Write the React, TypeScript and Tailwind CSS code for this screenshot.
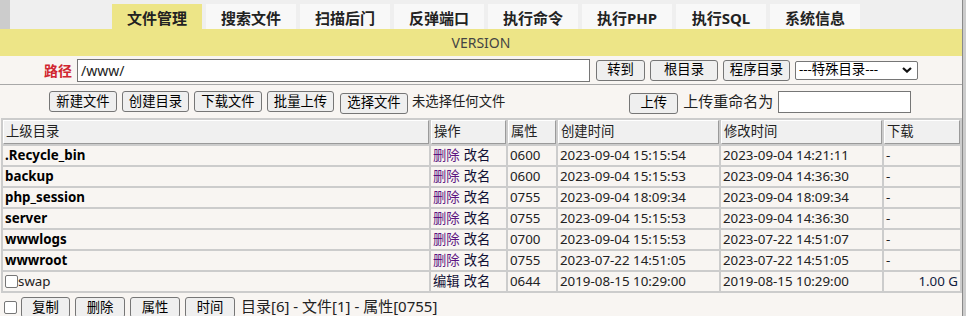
const tabs = ["文件管理", "搜索文件", "扫描后门", "反弹端口", "执行命令", "执行PHP", "执行SQL", "系统信息"]

const rows = [
  { name: ".Recycle_bin", perm: "0600", ctime: "2023-09-04 15:15:54", mtime: "2023-09-04 14:21:11" },
  { name: "backup", perm: "0600", ctime: "2023-09-04 15:15:53", mtime: "2023-09-04 14:36:30" },
  { name: "php_session", perm: "0755", ctime: "2023-09-04 18:09:34", mtime: "2023-09-04 18:09:34" },
  { name: "server", perm: "0755", ctime: "2023-09-04 15:15:53", mtime: "2023-09-04 14:36:30" },
  { name: "wwwlogs", perm: "0700", ctime: "2023-09-04 15:15:53", mtime: "2023-07-22 14:51:07" },
  { name: "wwwroot", perm: "0755", ctime: "2023-07-22 14:51:05", mtime: "2023-07-22 14:51:05" },
]

function Btn({ label, w }: { label: string; w: string }) {
  return (
    <button
      type="button"
      className={`${w} h-[21px] shrink-0 rounded-[3px] border border-[#767676] bg-[#efefef] text-center text-[13.33px] leading-none text-black`}
    >
      {label}
    </button>
  )
}

function Check() {
  return <span className="block h-[13px] w-[13px] shrink-0 rounded-[2px] border border-[#767676] bg-white" />
}

const head = "flex h-[24px] items-center border border-t-white border-l-white border-b-[#9a9a9a] border-r-[#9a9a9a] bg-[#f0f0f0] px-[2px] text-[13.33px] text-[#222]"
const cell = "flex h-[19px] items-center bg-[#f8f5f2] px-[2px] text-[13.33px] text-[#222] whitespace-nowrap"

export default function App() {
  return (
    <div
      className="flex h-[316px] w-[966px] overflow-hidden bg-[#f8f5f2]"
      style={{ fontFamily: '"Noto Sans", "Noto Sans CJK SC", sans-serif' }}
    >
      <div className="flex w-[962px] flex-col">
        {/* tabs */}
        <div className="flex h-[29px] shrink-0 bg-[#efefef]">
          <div className="w-[10px] bg-[#cccccc]" />
          <div className="ml-[102px] flex gap-[4px] pt-[4px]">
            {tabs.map((t, i) => (
              <div
                key={t}
                className={`flex w-[90px] items-center justify-center pt-[3px] text-[15px] font-bold text-[#222] ${
                  i === 0 ? "bg-[#ede587]" : "bg-[#f8f8f8]"
                }`}
              >
                {t}
              </div>
            ))}
          </div>
        </div>
        <div className="flex h-[27px] shrink-0 items-center justify-center bg-[#ede587] text-[14px] text-[#444]">VERSION</div>

        {/* path row */}
        <div className="flex h-[29px] shrink-0 items-center border-b border-[#a8a8a8] pl-[44px]">
          <span className="text-[14px] font-bold text-[#d0262f]">路径</span>
          <div className="ml-[5px] flex h-[23px] w-[513px] items-center border border-[#767676] bg-white px-[3px] text-[14px] text-[#222]">
            /www/
          </div>
          <div className="ml-[6px] flex gap-[5px]">
            <Btn label="转到" w="w-[49px]" />
            <Btn label="根目录" w="w-[68px]" />
            <Btn label="程序目录" w="w-[67px]" />
          </div>
          <div className="ml-[5px] flex h-[19px] w-[123px] items-center justify-between rounded-[2px] border border-[#767676] bg-white pl-[3px] pr-[5px] text-[13.33px] text-black">
            <span>---特殊目录---</span>
            <svg width="10" height="6" viewBox="0 0 10 6">
              <path d="M1 1l4 3.6L9 1" fill="none" stroke="#111" strokeWidth="2.2" />
            </svg>
          </div>
        </div>

        {/* upload row */}
        <div className="flex h-[33px] shrink-0 items-center pl-[49px]">
          <div className="flex gap-[5px]">
            <Btn label="新建文件" w="w-[68px]" />
            <Btn label="创建目录" w="w-[67px]" />
            <Btn label="下载文件" w="w-[68px]" />
            <Btn label="批量上传" w="w-[67px]" />
          </div>
          <div className="ml-[6px]">
            <Btn label="选择文件" w="w-[68px]" />
          </div>
          <span className="ml-[4px] text-[13.33px] text-[#222]">未选择任何文件</span>
          <div className="ml-[124px]">
            <Btn label="上传" w="w-[49px]" />
          </div>
          <span className="ml-[5px] text-[15px] text-[#222]">上传重命名为</span>
          <div className="ml-[5px] h-[22px] w-[133px] border border-[#767676] bg-white" />
        </div>

        {/* file table */}
        <div className="ml-[1px] grid w-[961px] shrink-0 grid-cols-[426px_75px_48px_161px_161px_76px] gap-[2px] bg-[#cccccc] p-[2px]">
          <div className={head}>上级目录</div>
          <div className={head}>操作</div>
          <div className={head}>属性</div>
          <div className={head}>创建时间</div>
          <div className={head}>修改时间</div>
          <div className={head}>下载</div>
          {rows.map((r) => (
            <div key={r.name} className="contents">
              <div className={`${cell} font-bold text-black`}>{r.name}</div>
              <div className={cell}>
                <span className="text-[#5c1480]">删除</span>
                <span className="ml-[4px] text-[#101035]">改名</span>
              </div>
              <div className={cell}>{r.perm}</div>
              <div className={cell}>{r.ctime}</div>
              <div className={cell}>{r.mtime}</div>
              <div className={cell}>-</div>
            </div>
          ))}
          <div className={cell}>
            <Check />
            <span>swap</span>
          </div>
          <div className={cell}>
            <span className="text-[#101035]">编辑</span>
            <span className="ml-[4px] text-[#101035]">改名</span>
          </div>
          <div className={cell}>0644</div>
          <div className={cell}>2019-08-15 10:29:00</div>
          <div className={cell}>2019-08-15 10:29:00</div>
          <div className={`${cell} justify-end text-[#102040]`}>1.00 G</div>
        </div>

        {/* bottom actions */}
        <div className="mt-[4px] flex shrink-0 items-start pl-[4px]">
          <div className="mt-[4px]">
            <Check />
          </div>
          <div className="ml-[4px] flex gap-[5px]">
            <Btn label="复制" w="w-[49px]" />
            <Btn label="删除" w="w-[50px]" />
            <Btn label="属性" w="w-[50px]" />
            <Btn label="时间" w="w-[50px]" />
          </div>
          <span className="ml-[6px] text-[15px] leading-[19px] text-[#222]">目录[6] - 文件[1] - 属性[0755]</span>
        </div>
      </div>
      <div className="w-[4px] border-l border-[#8a8a8a] bg-[#cccccc]" />
    </div>
  )
}
